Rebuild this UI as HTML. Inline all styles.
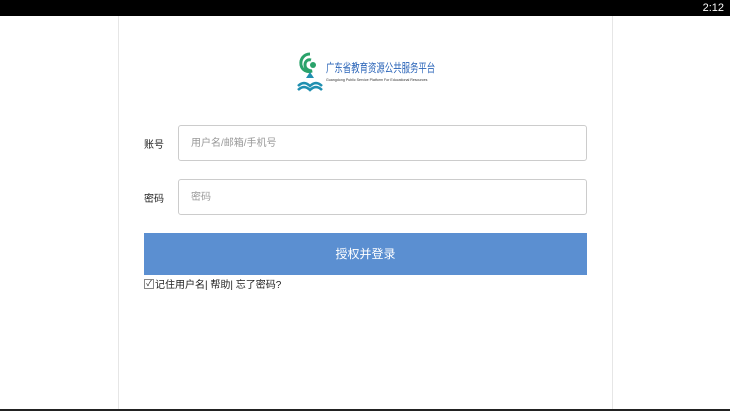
<!DOCTYPE html>
<html><head><meta charset="utf-8"><style>
body{margin:0;width:730px;height:411px;background:#fff;position:relative;overflow:hidden;font-family:"Liberation Sans","Noto Sans CJK SC",sans-serif;}
.bar{position:absolute;left:0;top:0;width:730px;height:16px;background:#000;color:#fff;font-size:11px;text-align:right;}
.bar span{position:absolute;right:6px;top:2px}
.card{position:absolute;left:118px;top:16px;width:493px;height:395px;border-left:1px solid #e6e6e6;border-right:1px solid #e6e6e6;}
.bottom{position:absolute;left:0;top:409px;width:730px;height:2px;background:#222}
.lbl{position:absolute;left:144px;font-size:10px;color:#222}
.inp{position:absolute;left:178px;width:409px;height:36px;border:1px solid #ccc;border-radius:3px;font-size:10px;color:#999;line-height:35px;text-indent:12px;box-sizing:border-box}
.btn{position:absolute;left:144px;top:233px;width:443px;height:42px;background:#5b8fd1;color:#fff;font-size:12px;text-align:center;line-height:42px}
.rem{position:absolute;left:144px;top:276px;font-size:10px;color:#222;display:flex;align-items:center}
.cb{width:8px;height:8px;border:1px solid #888;margin-right:1px;font-size:8px;line-height:8px;text-align:center}
.logo-t{position:absolute;left:326px;top:59px;font-size:12px;color:#2a64b8;transform:scaleX(0.7);transform-origin:left top;white-space:nowrap}
.logo-s{position:absolute;left:326px;top:78px;font-size:8px;color:#333;transform:scale(0.45);transform-origin:left top;white-space:nowrap}
</style></head><body>
<div class="bar"><span>2:12</span></div>
<div class="card"></div>
<svg style="position:absolute;left:296px;top:50px" width="28" height="42" viewBox="0 0 28 42">
<path d="M14 4c-6 0-10 5-9 11 1 5 6 8 11 6-3 0-7-2-7-6 0-4 3-6 6-5" fill="none" stroke="#2aa26a" stroke-width="3"/>
<circle cx="17" cy="15" r="3" fill="#2aa26a"/>
<path d="M2 36c4-4 8-4 12 0 4-4 8-4 12 0M2 40c4-4 8-4 12 0 4-4 8-4 12 0" fill="none" stroke="#1f8fb0" stroke-width="2.5"/>
<path d="M10 28l4-6 4 6z" fill="#1f8fb0"/>
</svg>
<div class="logo-t">广东省教育资源公共服务平台</div>
<div class="logo-s">Guangdong Public Service Platform For Educational Resources</div>
<div class="lbl" style="top:136px">账号</div>
<div class="inp" style="top:125px">用户名/邮箱/手机号</div>
<div class="lbl" style="top:190px">密码</div>
<div class="inp" style="top:179px">密码</div>
<div class="btn">授权并登录</div>
<div class="rem"><div class="cb">✓</div>记住用户名| 帮助| 忘了密码?</div>
<div class="bottom"></div>
</body></html>
